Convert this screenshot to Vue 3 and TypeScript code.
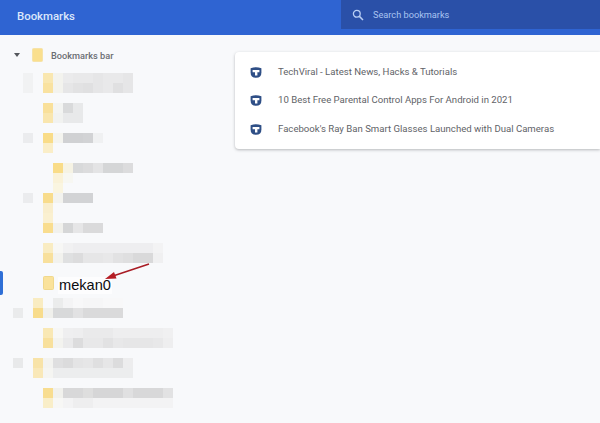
<script setup lang="ts">
const parse = (rows: string[]) =>
  rows.flatMap((row) => {
    const cells = row.split(' ').map((c) => (c === '.' ? 'transparent' : '#' + c))
    return Array.from({ length: 16 }, (_, i) => cells[i] ?? 'transparent')
  })

const upper = parse([
  '. f1f2f3 . f9e7b0 f3f3ee ebebec e9e9ea e9e9ea e6e6e7 e9e9ea e9e9ea e6e6e7',
  '. f1f2f3 . f9e2a0 f3f3ee e6e6e7 e2e2e3 e0e0e1 e6e6e7 e9e9ea e0e0e1 e6e6e7',
  '.',
  '. . . f9e09a f3f4f2 d9dadb e8e9ea',
  '. . . f9e6ae f1f2f0 e8e9ea e8e9ea',
  '.',
  '. ebecee . f9dc88 f4f4ef d0d1d3 d0d1d3 d2d3d5 f0f1f2',
  '. . . faeec8',
  '.',
  '. . . . f9dc88 f6f3e4 d8d9da dcdcdd e4e4e5 d5d6d7 d5d6d7 dcdcdd',
  '. . . . faf2d8 f7f7f2',
  '. . . . faf5e0',
  '. ebecee . f8dc8c f3f3ef d2d3d5 d2d3d5 d2d3d5',
  '. . . f9eecd',
  '. . . faf0d0',
  '. . . f9dd8e f1f1ed d5d6d7 e6e6e7 dadadb dadadb',
  '.',
  '. . . f9ecc2 f7f7f5 f1f1f2 eeeef0 eeeef0 eeeef0 eeeef0 eeeef0 eeeef0 eeeef0 eeeef0 f3f3f4',
  '. . . f8e09c f2f2ee dfe0e1 dcdcdd e6e6e7 e6e6e7 e8e8e9 e2e2e3 dfdfe0 d9d9da d9d9da f0f0f1',
])

const lower = parse([
  '. . f9ecc2 . ebecec f4f4f5 f8f8f9 f6f6f7 f6f6f7 f8f8f9 f8f8f9',
  'eaebec . f8dc8c f0f0ec d8d9da d8d9da e2e2e3 dadadb dadadb dadadb dadadb',
  '.',
  '. . . f9e8b4 f7f7f5 efeff0 eeeeef eaeaeb eaeaeb eaeaeb eeeeef eeeeef eeeeef eeeeef eeeeef f0f0f1',
  '. . . f8e09c f3f3ef eaeaeb dcdcdd e8e8e9 e8e8e9 e2e2e3 e8e8e9 e6e6e7 e6e6e7 e6e6e7 e8e8e9 eeeeef',
  '.',
  'e8e9ea . f8e3a8 f3f3f0 dfdfe0 dbdbdc e4e4e5 e6e6e7 dfdfe0 e6e6e7 dcdcdd ededee',
  '. . f9e8b8 f5f5f2 ecedee ecedee ecedee ecedee ecedee ecedee ecedee ecedee',
  '.',
  '. . . f8dd90 f1f1ed d8d8d9 d8d8d9 dedede d6d6d7 d6d6d7 d6d6d7 e0e0e1 d8d8d9 d8d8d9 d8d8d9 e2e2e3',
  '. . . f9eec8 f7f7f5 f3f3f4 eeeeef eeeeef f3f3f4 f3f3f4 f3f3f4 f3f3f4 f3f3f4 f3f3f4 f3f3f4 f3f3f4',
])

const links = [
  'TechViral - Latest News, Hacks & Tutorials',
  '10 Best Free Parental Control Apps For Android in 2021',
  "Facebook's Ray Ban Smart Glasses Launched with Dual Cameras",
]
</script>

<template>
  <div class="page">
    <header class="bar">
      <h1 class="title">Bookmarks</h1>
      <div class="search">
        <svg class="search-icon" viewBox="0 0 12 12" width="12" height="12">
          <circle cx="4.8" cy="4.8" r="3.4" fill="none" stroke="#b9cff5" stroke-width="1.3" />
          <path d="M7.4 7.4 L11 11" stroke="#b9cff5" stroke-width="1.5" />
        </svg>
        <span class="search-text">Search bookmarks</span>
      </div>
    </header>

    <main class="body">
      <nav class="tree">
        <div class="root">
          <span class="caret"></span>
          <span class="folder folder-root"></span>
          <span class="root-label">Bookmarks bar</span>
        </div>

        <div class="mosaic">
          <i v-for="(c, i) in upper" :key="i" :style="{ background: c }"></i>
        </div>

        <div class="selected">
          <span class="marker"></span>
          <span class="folder folder-sel"></span>
          <span class="sel-label">mekan0</span>
          <svg class="arrow" viewBox="0 0 50 22" width="50" height="22">
            <path d="M49 4 L13 16" stroke="#a81c24" stroke-width="1.7" fill="none" />
            <path d="M5 19 L14 12 L16.5 18.5 Z" fill="#b51c24" />
          </svg>
        </div>

        <div class="mosaic">
          <i v-for="(c, i) in lower" :key="i" :style="{ background: c }"></i>
        </div>
      </nav>

      <section class="content">
        <ul class="card">
          <li v-for="link in links" :key="link" class="row">
            <svg class="favicon" viewBox="0 0 12 12" width="12" height="12">
              <path d="M.6 2.2 Q6 .2 11.4 2.2 V6.4 Q11.4 11.8 6 11.8 Q.6 11.8 .6 6.4 Z" fill="#2f4f86" />
              <path d="M2.6 4 H9.4 V6.2 H7.4 V9.6 H5 V6.2 H2.6 Z" fill="#fff" />
            </svg>
            <span class="link">{{ link }}</span>
          </li>
        </ul>
      </section>
    </main>
  </div>
</template>

<style>
html, body { margin: 0; background: #f8f9fb; }
</style>

<style scoped>
.page {
  width: 600px;
  height: 423px;
  overflow: hidden;
  background: #f8f9fb;
  font-family: Roboto, "Liberation Sans", sans-serif;
}
.bar {
  height: 35px;
  background: #2f64d2;
  display: flex;
  justify-content: space-between;
  align-items: flex-start;
}
.title {
  margin: 0 0 0 17px;
  font-size: 11.4px;
  line-height: 32px;
  font-weight: 500;
  color: #dbe7fb;
}
.search {
  width: 259px;
  height: 29px;
  background: #2a50a8;
  display: flex;
  align-items: center;
  padding-left: 11px;
  box-sizing: border-box;
  gap: 9px;
}
.search-icon { flex: none; }
.search-text { font-size: 9.2px; color: #a9c4f1; }
.body { display: flex; }
.tree { width: 235px; flex: none; }
.root {
  height: 38px;
  display: flex;
  align-items: center;
  box-sizing: border-box;
  padding: 2px 0 0 14px;
}
.caret {
  width: 0;
  height: 0;
  border-left: 3px solid transparent;
  border-right: 3px solid transparent;
  border-top: 4px solid #55585d;
}
.folder {
  display: block;
  background: #fadf8e;
  border: 1px solid #f6e3a8;
  border-radius: 1.5px;
  box-sizing: border-box;
}
.folder-root { width: 11px; height: 14px; margin-left: 12px; }
.root-label {
  margin-left: 8px;
  font-size: 9.2px;
  font-weight: 500;
  color: #6b6e73;
}
.mosaic {
  margin-left: 13px;
  display: grid;
  grid-template-columns: repeat(16, 10px);
  grid-auto-rows: 10px;
}
.selected {
  position: relative;
  height: 35px;
  display: flex;
  align-items: center;
  padding-left: 43px;
}
.marker {
  position: absolute;
  left: 0;
  top: 8px;
  width: 2.5px;
  height: 24px;
  background: #2f6fd6;
  border-radius: 0 2px 2px 0;
}
.folder-sel { width: 11px; height: 14px; margin-top: 5px; background: #fae29b; border-color: #f0d88c; }
.sel-label {
  margin: 9px 0 0 4px;
  padding: 0 1px;
  background: #fdfdfe;
  font-family: "Liberation Sans", Arial, sans-serif;
  font-size: 14.6px;
  line-height: 17px;
  color: #0c0c10;
}
.arrow { position: absolute; left: 100px; top: -3px; }
.content { flex: 1; padding-top: 17px; }
.card {
  list-style: none;
  margin: 0;
  padding: 5px 0 7px;
  height: 97px;
  box-sizing: border-box;
  background: #fff;
  border-radius: 4px 0 0 4px;
  box-shadow: 0 1px 3px rgba(60, 64, 67, .35);
}
.row {
  height: 28.5px;
  display: flex;
  align-items: center;
  padding-left: 15px;
}
.favicon { flex: none; margin-top: 1px; }
.link { margin-left: 16px; font-size: 9.6px; color: #5f6368; white-space: nowrap; }
</style>
